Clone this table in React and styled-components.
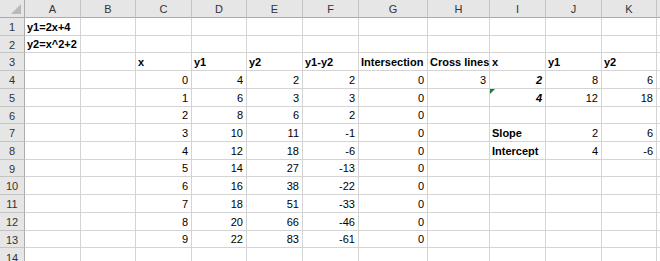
import React from "react";
import styled, { createGlobalStyle } from "styled-components";

const GlobalStyle = createGlobalStyle`
  html, body {
    margin: 0;
    padding: 0;
    background: #ffffff;
    overflow: hidden;
  }
`;

const COLS = ["A", "B", "C", "D", "E", "F", "G", "H", "I", "J", "K", ""];
const COL_WIDTHS = [25, 56, 55, 56, 55, 56, 56, 69, 62, 56, 56, 55, 20];
const ROW_HEIGHTS = [18, 18, 17, 18, 18, 18, 17, 18, 18, 17, 18, 18, 18, 17, 20];

// each row: [A..K] as { v, b (bold), i (italic), r (right aligned), mark }
const t = (v) => ({ v, b: true });
const n = (v) => ({ v, r: true });

const xs = [0, 1, 2, 3, 4, 5, 6, 7, 8, 9];

const buildRows = () => {
  const rows = [];
  rows.push([t("y1=2x+4")]);
  rows.push([t("y2=x^2+2")]);
  rows.push([null, null, t("x"), t("y1"), t("y2"), t("y1-y2"), t("Intersection"), t("Cross lines"), t("x"), t("y1"), t("y2")]);
  xs.forEach((x) => {
    const y1 = 2 * x + 4;
    const y2 = x * x + 2;
    const row = [null, null, n(x), n(y1), n(y2), n(y1 - y2), n(y1 === y2 ? 1 : 0)];
    if (x === 0) row.push(n(3), { v: 2, r: true, b: true, i: true }, n(8), n(6));
    if (x === 1) row.push(null, { v: 4, r: true, b: true, i: true, mark: true }, n(12), n(18));
    if (x === 3) row.push(null, t("Slope"), n(2), n(6));
    if (x === 4) row.push(null, t("Intercept"), n(4), n(-6));
    rows.push(row);
  });
  rows.push([]);
  return rows;
};

const Sheet = styled.div`
  display: grid;
  grid-template-columns: ${COL_WIDTHS.map((w) => w + "px").join(" ")};
  grid-template-rows: ${ROW_HEIGHTS.map((h) => h + "px").join(" ")};
  width: 660px;
  height: 261px;
  overflow: hidden;
  font-family: "Liberation Sans", Arial, sans-serif;
  font-size: 11px;
  color: #000;
`;

const Corner = styled.div`
  position: relative;
  box-sizing: border-box;
  background: #e6e6e6;
  border-right: 1px solid #ababab;
  border-bottom: 1px solid #ababab;

  &::after {
    content: "";
    position: absolute;
    right: 3px;
    bottom: 3px;
    border-left: 10px solid transparent;
    border-bottom: 10px solid #b9b9b9;
  }
`;

const ColHead = styled.div`
  box-sizing: border-box;
  display: flex;
  align-items: center;
  justify-content: center;
  background: #e6e6e6;
  border-right: 1px solid #c4c4c4;
  border-bottom: 1px solid #ababab;
  color: #333;
  font-size: 11px;
  padding-top: 1px;
`;

const RowHead = styled.div`
  box-sizing: border-box;
  display: flex;
  align-items: center;
  justify-content: center;
  background: #e6e6e6;
  border-right: 1px solid #ababab;
  border-bottom: 1px solid #c4c4c4;
  color: #333;
  font-size: 11px;
  padding-top: 1px;
`;

const Cell = styled.div`
  position: relative;
  box-sizing: border-box;
  display: flex;
  align-items: flex-end;
  justify-content: ${({ $right }) => ($right ? "flex-end" : "flex-start")};
  padding: 0 3px 2px 2px;
  border-right: 1px solid #d4d4d4;
  border-bottom: 1px solid #d4d4d4;
  font-weight: ${({ $bold }) => ($bold ? 700 : 400)};
  font-style: ${({ $italic }) => ($italic ? "italic" : "normal")};
  white-space: nowrap;
  overflow: visible;
  z-index: ${({ $spill }) => ($spill ? 1 : 0)};

  ${({ $mark }) =>
    $mark &&
    `
    &::before {
      content: "";
      position: absolute;
      left: 0;
      top: 0;
      border-top: 5px solid #1e7e34;
      border-right: 5px solid transparent;
    }
  `}
`;

const App = () => {
  const rows = buildRows();
  return (
    <>
      <GlobalStyle />
      <Sheet>
        <Corner />
        {COLS.map((c, i) => (
          <ColHead key={"h" + i}>{c}</ColHead>
        ))}
        {rows.map((row, r) => (
          <React.Fragment key={r}>
            <RowHead>{r + 1}</RowHead>
            {COLS.map((_, c) => {
              const cell = row[c];
              return (
                <Cell
                  key={c}
                  $right={cell && cell.r}
                  $bold={cell && cell.b}
                  $italic={cell && cell.i}
                  $mark={cell && cell.mark}
                  $spill={cell && !cell.r}
                >
                  {cell ? cell.v : ""}
                </Cell>
              );
            })}
          </React.Fragment>
        ))}
      </Sheet>
    </>
  );
};

export default App;
